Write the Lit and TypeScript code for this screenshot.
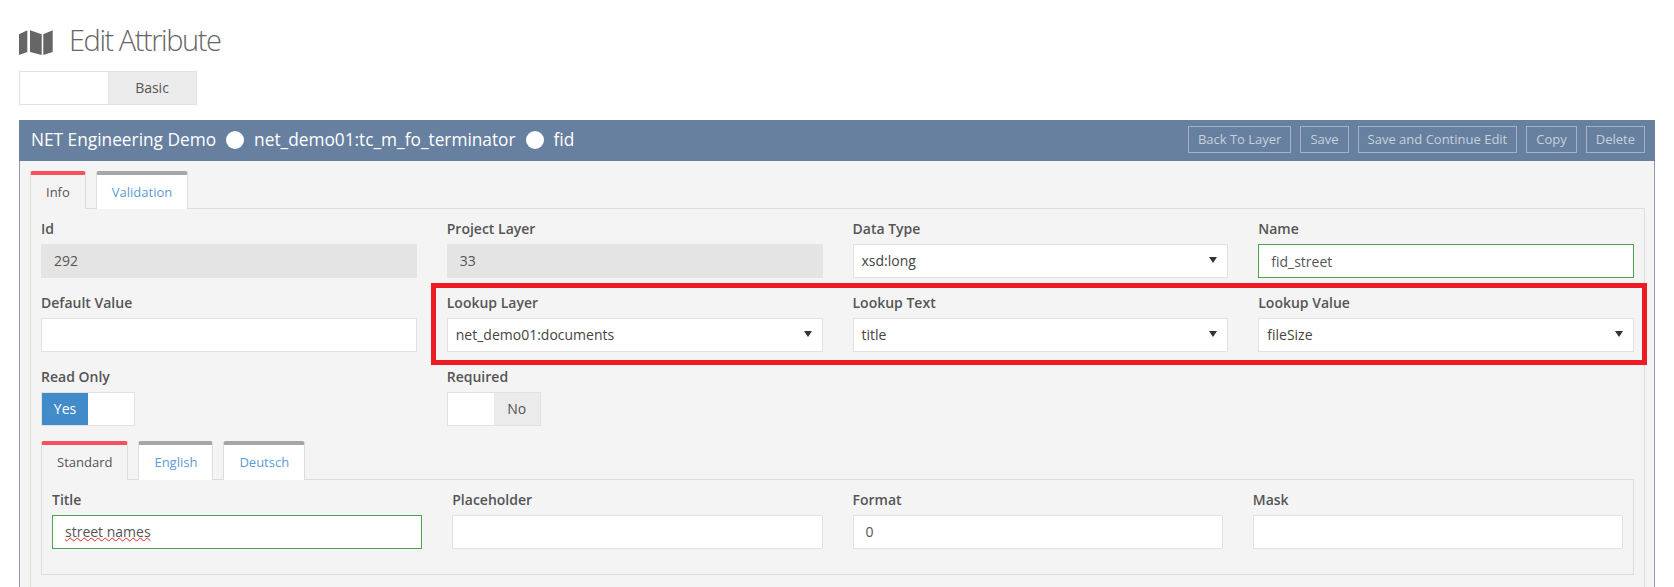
import { LitElement, html, css } from "lit";
import { customElement } from "lit/decorators.js";

type Field = { label: string; value?: string; kind: "input" | "select" | "readonly" | "valid"; spell?: boolean };

@customElement("app-root")
export class AppRoot extends LitElement {
  static styles = css`
    :host {
      display: block;
      height: 587px;
      overflow: hidden;
      background: #fff;
      font-family: "Open Sans", sans-serif;
      font-size: 14px;
      color: #555;
      box-sizing: border-box;
      padding: 0 19px;
    }
    * { box-sizing: border-box; }
    .head { display: flex; align-items: center; height: 40px; margin-top: 20px; gap: 16px; }
    .head svg { width: 34px; height: 25px; flex: none; margin-top: 5px; }
    .head h1 { margin: 0; font-size: 29px; font-weight: 300; line-height: 40px; color: #666; letter-spacing: -1.45px; }
    .toggle { display: flex; border: 1px solid #e2e2e2; height: 34px; background: #fff; line-height: 32px; text-align: center; font-size: 14px; }
    .toggle span { display: block; flex: 1; }
    .toggle .off { background: #ebebeb; color: #555; }
    .toggle .on { background: #428bca; color: #fff; }
    .top-toggle { width: 178px; margin-top: 11px; }
    .panel { margin-top: 15px; border: 1px solid #8c9ab8; border-top: 0; background: #f4f4f4; height: 600px; }
    .bar { height: 41px; background: #67809f; margin: 0 -1px; padding: 0 10px 2px 12px; display: flex; align-items: center; color: #fff; font-size: 17.3px; }
    .crumb { display: flex; align-items: center; gap: 10px; flex: 1; white-space: nowrap; }
    .dot { width: 18px; height: 18px; border-radius: 50%; background: #fff; flex: none; }
    .btns { display: flex; gap: 9px; }
    .btn { height: 27px; border: 1px solid #a5b3c6; padding: 0 9px; line-height: 25px; font-size: 13px; color: #c6d0dc; white-space: nowrap; }
    .body { padding: 10px 9px 0 10px; position: relative; }
    .tabs { display: flex; gap: 10px; position: relative; z-index: 1; margin-bottom: -1px; }
    .tab { height: 38px; border: 1px solid #ddd; border-top: 4px solid #a6a6a6; border-bottom: 0; border-radius: 3px 3px 0 0; background: #fff; color: #5b9bd5; line-height: 35px; padding: 0 15px; font-size: 13px; }
    .tab.active { border-top-color: #f3525e; background: #f4f4f4; color: #555; }
    .content { border: 1px solid #ddd; padding: 10px 10px 0 10px; height: 500px; position: relative; }
    .grid { display: grid; grid-template-columns: repeat(4, 1fr); column-gap: 30px; }
    .field { height: 74px; }
    .field label, .label { display: block; font-weight: 600; font-size: 14px; line-height: 20px; color: #555; height: 25px; }
    .ctl { height: 34px; border: 1px solid #e2e2e2; background: #fff; padding: 0 12px; line-height: 32px; color: #555; position: relative; white-space: nowrap; }
    .ctl.readonly { background: #e4e4e4; border-color: #e4e4e4; }
    .ctl.valid { border-color: #4ea34e; line-height: 33px; }
    .ctl.select { padding-left: 8px; color: #444; }
    .ctl.select::after { content: ""; position: absolute; right: 10px; top: 12px; border-left: 4px solid transparent; border-right: 4px solid transparent; border-top: 6px solid #333; }
    .ctl.valid:has(.spell) { line-height: 31px; }
    .spell { text-decoration: underline wavy #e22; text-decoration-thickness: 1px; text-underline-offset: 0; }
    .sw { width: 94px; }
    .subtabs { margin-top: 0; }
    .subtabs .tab { height: 39px; }
    .subcontent { border: 1px solid #ddd; height: 96px; padding: 10px 10px 0; }
    .sub { height: 70px; }
    .mark { position: absolute; left: 400px; top: 74px; width: 1216px; height: 82px; border: 5px solid #ed1c24; pointer-events: none; z-index: 2; }
  `;

  private ctl(f: Field) {
    const cls = f.kind === "input" ? "" : f.kind;
    return html`<div class="ctl ${cls}">${f.spell ? html`<span class="spell">${f.value}</span>` : f.value ?? ""}</div>`;
  }

  private field(f: Field) {
    return html`<div class="field"><label>${f.label}</label>${this.ctl(f)}</div>`;
  }

  private sw(label: string, on: boolean) {
    return html`<div class="field">
      <label>${label}</label>
      <div class="toggle sw">
        ${on ? html`<span class="on">Yes</span><span></span>` : html`<span></span><span class="off">No</span>`}
      </div>
    </div>`;
  }

  render() {
    const rows: Field[] = [
      { label: "Id", value: "292", kind: "readonly" },
      { label: "Project Layer", value: "33", kind: "readonly" },
      { label: "Data Type", value: "xsd:long", kind: "select" },
      { label: "Name", value: "fid_street", kind: "valid" },
      { label: "Default Value", kind: "input" },
      { label: "Lookup Layer", value: "net_demo01:documents", kind: "select" },
      { label: "Lookup Text", value: "title", kind: "select" },
      { label: "Lookup Value", value: "fileSize", kind: "select" },
    ];
    const subs: Field[] = [
      { label: "Title", value: "street names", kind: "valid", spell: true },
      { label: "Placeholder", kind: "input" },
      { label: "Format", value: "0", kind: "input" },
      { label: "Mask", kind: "input" },
    ];
    return html`
      <div class="head">
        <svg viewBox="0 0 34 25" fill="#666">
          <path d="M0 4.3 8.3.3V22L0 25z" />
          <path d="M11 .3 22.7 4.3V25L11 22z" />
          <path d="M24.3 4.3 33.7.3V22l-9.4 3z" />
        </svg>
        <h1>Edit Attribute</h1>
      </div>
      <div class="toggle top-toggle"><span></span><span class="off">Basic</span></div>
      <div class="panel">
        <div class="bar">
          <div class="crumb">
            <span>NET Engineering Demo</span><i class="dot"></i>
            <span>net_demo01:tc_m_fo_terminator</span><i class="dot"></i>
            <span>fid</span>
          </div>
          <div class="btns">
            ${["Back To Layer", "Save", "Save and Continue Edit", "Copy", "Delete"].map((b) => html`<div class="btn">${b}</div>`)}
          </div>
        </div>
        <div class="body">
          <div class="tabs">
            <div class="tab active">Info</div>
            <div class="tab">Validation</div>
          </div>
          <div class="content">
            <div class="mark"></div>
            <div class="grid">
              ${rows.map((r) => this.field(r))}
              ${this.sw("Read Only", true)}
              ${this.sw("Required", false)}
            </div>
            <div class="tabs subtabs">
              <div class="tab active">Standard</div>
              <div class="tab">English</div>
              <div class="tab">Deutsch</div>
            </div>
            <div class="subcontent">
              <div class="grid">
                ${subs.map((s) => html`<div class="sub"><label class="label">${s.label}</label>${this.ctl(s)}</div>`)}
              </div>
            </div>
          </div>
        </div>
      </div>
    `;
  }
}
